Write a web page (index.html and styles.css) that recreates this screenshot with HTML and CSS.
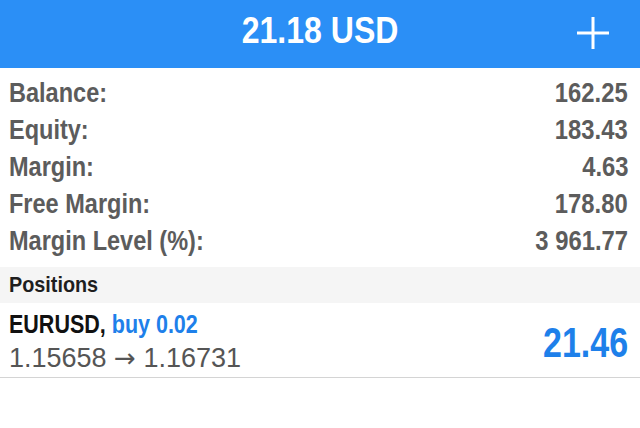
FILE: index.html
```html
<!DOCTYPE html>
<html>
<head>
<meta charset="utf-8">
<link rel="stylesheet" href="styles.css">
</head>
<body>
<header class="topbar">
  <div class="spacer"></div>
  <h1 class="title">21.18 USD</h1>
  <div class="actions">
    <svg class="plus" width="32" height="32" viewBox="0 0 32 32"><path d="M16 0V32M0 16H32" stroke="#fff" stroke-width="3" fill="none"/></svg>
  </div>
</header>
<section class="summary">
  <div class="row"><span class="lbl">Balance:</span><span class="val">162.25</span></div>
  <div class="row"><span class="lbl">Equity:</span><span class="val">183.43</span></div>
  <div class="row"><span class="lbl">Margin:</span><span class="val">4.63</span></div>
  <div class="row"><span class="lbl">Free Margin:</span><span class="val">178.80</span></div>
  <div class="row"><span class="lbl">Margin Level (%):</span><span class="val">3 961.77</span></div>
</section>
<div class="section-head"><span class="head-text">Positions</span></div>
<div class="position">
  <div class="pos-info">
    <div class="pos-title"><span class="sym">EURUSD,</span> <span class="side">buy 0.02</span></div>
    <div class="pos-price">1.15658 <span class="arrow">→</span> 1.16731</div>
  </div>
  <div class="pos-profit">21.46</div>
</div>
</body>
</html>
```
FILE: styles.css
```css
html, body {
  margin: 0;
  padding: 0;
  background: #ffffff;
}
body {
  width: 640px;
  font-family: "Liberation Sans", Arial, sans-serif;
}
.topbar {
  height: 68px;
  box-sizing: border-box;
  background: #2b8ff6;
  display: grid;
  grid-template-columns: 1fr auto 1fr;
  align-items: center;
  padding-bottom: 6px;
}
.title {
  margin: 0;
  color: #ffffff;
  font-weight: bold;
  font-size: 36px;
  line-height: 44px;
  transform: scaleX(0.89);
}
.actions {
  display: flex;
  justify-content: flex-end;
  padding-right: 31px;
}
.plus {
  display: block;
  margin-top: 4px;
}
.summary {
  padding: 6px 12px 8px 9px;
}
.row {
  display: flex;
  justify-content: space-between;
  height: 37px;
  line-height: 37px;
  font-size: 28px;
  font-weight: bold;
  color: #5c5c5c;
}
.lbl {
  display: inline-block;
  transform: scaleX(0.84);
  transform-origin: left center;
}
.val {
  display: inline-block;
  transform: scaleX(0.85);
  transform-origin: right center;
}
.section-head {
  height: 36px;
  line-height: 36px;
  background: #f5f5f5;
  padding-left: 9px;
  font-size: 22px;
  font-weight: bold;
  color: #1e1e1e;
}
.head-text {
  display: inline-block;
  transform: scaleX(0.9);
  transform-origin: left center;
}
.position {
  height: 75px;
  box-sizing: border-box;
  border-bottom: 1px solid #d4d4d4;
  padding: 4px 12px 0 9px;
  display: flex;
  justify-content: space-between;
  align-items: center;
}
.pos-info {
  align-self: flex-start;
}
.pos-title {
  font-size: 25px;
  line-height: 34px;
  font-weight: bold;
  transform: scaleX(0.86);
  transform-origin: left center;
  white-space: nowrap;
}
.sym {
  color: #111111;
}
.side {
  color: #1e80ea;
}
.pos-price {
  font-size: 27px;
  line-height: 35px;
  color: #555555;
}
.arrow {
  font-family: "DejaVu Sans", sans-serif;
  font-size: 26px;
}
.pos-profit {
  font-size: 42px;
  line-height: 42px;
  font-weight: bold;
  color: #1e80ea;
  margin-top: 2px;
  transform: scaleX(0.81);
  transform-origin: right center;
}
```
